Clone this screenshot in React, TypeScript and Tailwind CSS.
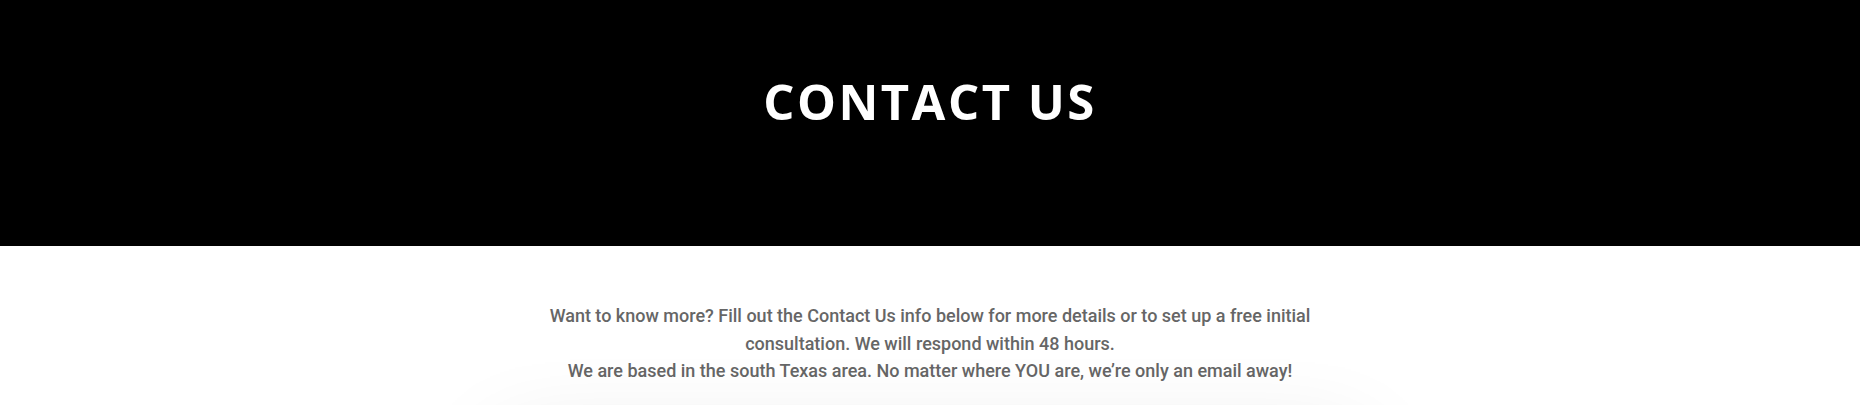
import React from "react";

export default function App() {
  return (
    <div className="w-full bg-white" style={{ fontFamily: "Roboto, 'Liberation Sans', sans-serif" }}>
      <header className="h-[246px] bg-black flex justify-center pt-[68px]">
        <h1
          className="text-white text-[49px] leading-[66px] font-bold tracking-[2.5px]"
          style={{ fontFamily: "'Open Sans', sans-serif" }}
        >
          CONTACT US
        </h1>
      </header>
      <section className="flex flex-col items-center pt-[56px] pb-[200px]">
        <div className="max-w-[780px] text-center text-[18px] leading-[27.5px] font-medium text-[#666666]">
          <p>
            Want to know more? Fill out the Contact Us info below for more details or to set up a free initial
            consultation. We will respond within 48 hours.
          </p>
          <p>We are based in the south Texas area. No matter where YOU are, we’re only an email away!</p>
        </div>
        <div className="mt-[60px] w-[860px] h-[400px] bg-white shadow-[0_0_90px_rgba(0,0,0,0.12)]" />
      </section>
    </div>
  );
}
